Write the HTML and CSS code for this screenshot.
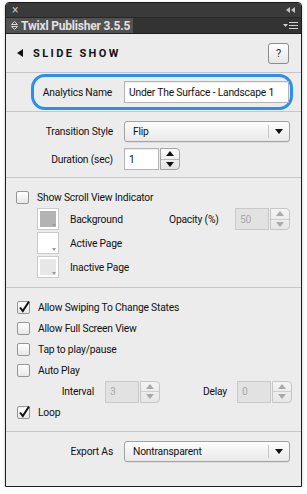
FILE: index.html
```html
<!DOCTYPE html>
<html lang="en">
<head>
    <meta charset="UTF-8">
    <title>Twixl Publisher</title>
    <link rel="stylesheet" href="styles.css">
</head>
<body>
    <div class="panel">
        <div class="titlebar">
            <span class="close">×</span>
            <svg class="collapse" width="9" height="6" viewBox="0 0 9 6"><path d="M4 0L0 3L4 6Z M9 0L5 3L9 6Z" fill="#c4c4c4"/></svg>
        </div>
        <div class="tabbar">
            <div class="tab">
                <svg class="updown" width="7" height="9" viewBox="0 0 7 9"><path d="M3.5 0.5L6.5 3.5H0.5Z M3.5 8.5L6.5 5.5H0.5Z" fill="none" stroke="#d8d8d8" stroke-width="1"/></svg>
                Twixl Publisher 3.5.5
            </div>
            <div class="tab-menu">
                <svg width="15" height="9" viewBox="0 0 15 9"><path d="M0 3H5L2.5 6Z" fill="#d0d0d0"/><path d="M6 1.5H15M6 4.5H15M6 7.5H15" stroke="#d0d0d0" stroke-width="1"/></svg>
            </div>
        </div>

        <div class="content">
            <div class="section head">
                <div class="head-title"><span class="back-arrow"></span>SLIDE SHOW</div>
                <div class="help">?</div>
            </div>

            <div class="section analytics">
                <div class="focus-ring">
                    <span class="ring-label">Analytics Name</span>
                    <div class="field name-field">Under The Surface - Landscape 1</div>
                </div>
            </div>

            <div class="section transition">
                <div class="row">
                    <span class="label">Transition Style</span>
                    <div class="select"><span class="select-value">Flip</span><span class="select-divider"></span><span class="select-caret"></span></div>
                </div>
                <div class="row duration-row">
                    <span class="label">Duration (sec)</span>
                    <div class="num">
                        <div class="field num-field">1</div>
                        <div class="spin"><span class="spin-up"></span><span class="spin-down"></span></div>
                    </div>
                </div>
            </div>

            <div class="section scroll">
                <div class="check-row">
                    <span class="checkbox"></span>
                    <span class="check-label">Show Scroll View Indicator</span>
                </div>
                <div class="swatch-row">
                    <span class="swatch"><span class="swatch-fill bg-fill"></span></span>
                    <span class="swatch-name">Background</span>
                    <span class="opacity-label">Opacity (%)</span>
                    <div class="num disabled">
                        <div class="field num-field">50</div>
                        <div class="spin"><span class="spin-up"></span><span class="spin-down"></span></div>
                    </div>
                </div>
                <div class="swatch-row">
                    <span class="swatch"><span class="swatch-fill active-fill"></span></span>
                    <span class="swatch-name">Active Page</span>
                </div>
                <div class="swatch-row">
                    <span class="swatch"><span class="swatch-fill inactive-fill"></span></span>
                    <span class="swatch-name">Inactive Page</span>
                </div>
            </div>

            <div class="section options">
                <div class="opt-row">
                    <span class="checkbox checked"><svg class="tick" width="14" height="14" viewBox="0 0 14 14"><path d="M3 7.5L5.8 11L12 1.5" fill="none" stroke="#111" stroke-width="2"/></svg></span>
                    <span class="check-label">Allow Swiping To Change States</span>
                </div>
                <div class="opt-row">
                    <span class="checkbox"></span>
                    <span class="check-label">Allow Full Screen View</span>
                </div>
                <div class="opt-row">
                    <span class="checkbox"></span>
                    <span class="check-label">Tap to play/pause</span>
                </div>
                <div class="opt-row">
                    <span class="checkbox"></span>
                    <span class="check-label">Auto Play</span>
                </div>
                <div class="timing-row">
                    <span class="interval-label">Interval</span>
                    <div class="num disabled">
                        <div class="field num-field">3</div>
                        <div class="spin"><span class="spin-up"></span><span class="spin-down"></span></div>
                    </div>
                    <span class="delay-label">Delay</span>
                    <div class="num disabled">
                        <div class="field num-field">0</div>
                        <div class="spin"><span class="spin-up"></span><span class="spin-down"></span></div>
                    </div>
                </div>
                <div class="opt-row">
                    <span class="checkbox checked"><svg class="tick" width="14" height="14" viewBox="0 0 14 14"><path d="M3 7.5L5.8 11L12 1.5" fill="none" stroke="#111" stroke-width="2"/></svg></span>
                    <span class="check-label">Loop</span>
                </div>
            </div>

            <div class="export">
                <div class="row">
                    <span class="label">Export As</span>
                    <div class="select"><span class="select-value">Nontransparent</span><span class="select-divider"></span><span class="select-caret"></span></div>
                </div>
            </div>
        </div>
    </div>
</body>
</html>
```

FILE: styles.css
```css
body {
    margin: 0;
    background: #ffffff;
    font-family: Roboto, "Liberation Sans", sans-serif;
    font-size: 10.3px;
    letter-spacing: -0.2px;
    color: #111111;
    white-space: nowrap;
}
.panel {
    margin: 2px 0 0 5px;
    width: 297px;
    height: 485px;
    box-sizing: border-box;
    border: 1px solid #1c1c1c;
    border-radius: 4px 4px 0 0;
    display: flex;
    flex-direction: column;
    overflow: hidden;
    box-shadow: 0 1px 3px rgba(0,0,0,.25);
}
.titlebar {
    height: 14px;
    flex: none;
    background: #3a3a3a;
    display: flex;
    align-items: center;
    justify-content: space-between;
    padding: 0 6px 0 6px;
}
.close {
    color: #bdbdbd;
    font-size: 12px;
    line-height: 12px;
}
.tabbar {
    height: 17px;
    flex: none;
    background: #333333;
    border-top: 1px solid #262626;
    border-bottom: 1px solid #1e1e1e;
    box-sizing: border-box;
    display: flex;
    justify-content: space-between;
}
.tab {
    width: 127px;
    background: #525252;
    color: #e2e2e2;
    font-weight: bold;
    font-size: 12px;
    letter-spacing: -0.2px;
    display: flex;
    align-items: center;
    padding-left: 5px;
    box-sizing: border-box;
}
.updown {
    margin-right: 3px;
}
.tab-menu {
    display: flex;
    align-items: center;
    padding-right: 3px;
}
.content {
    flex: 1;
    background: #ececec;
    display: flex;
    flex-direction: column;
}
.section {
    box-sizing: border-box;
    border-bottom: 1px solid #c5c5c5;
    flex: none;
}
.head {
    height: 39px;
    display: flex;
    align-items: center;
    justify-content: space-between;
    padding: 0 12px 0 11px;
}
.head-title {
    display: flex;
    align-items: center;
    font-weight: bold;
    font-size: 11px;
    letter-spacing: 2.4px;
    color: #111;
}
.back-arrow {
    width: 0;
    height: 0;
    border-top: 4px solid transparent;
    border-bottom: 4px solid transparent;
    border-right: 6px solid #111;
    margin-right: 10px;
}
.help {
    width: 21px;
    height: 21px;
    box-sizing: border-box;
    border: 1px solid #8c8c8c;
    border-radius: 3px;
    background: linear-gradient(#ffffff, #e6e6e6);
    display: flex;
    align-items: center;
    justify-content: center;
    font-size: 11px;
    color: #1a2340;
}
.analytics {
    height: 39px;
    padding-top: 1px;
}
.focus-ring {
    margin-left: 25px;
    width: 262px;
    height: 36px;
    box-sizing: border-box;
    border: 3px solid #2a8ef3;
    border-radius: 14px;
    display: flex;
    align-items: center;
}
.ring-label {
    width: 78px;
    text-align: right;
    margin-right: 12px;
}
.field {
    box-sizing: border-box;
    background: #ffffff;
    border: 1px solid #b4b4b4;
    box-shadow: inset 0 1px 1px rgba(0,0,0,.08);
    display: flex;
    align-items: center;
    padding-left: 4px;
}
.name-field {
    width: 165px;
    height: 22px;
}
.transition {
    height: 66px;
    padding-top: 9px;
}
.row {
    display: flex;
    align-items: center;
}
.label {
    width: 107px;
    text-align: right;
    margin-right: 11px;
}
.duration-row {
    margin-top: 6px;
}
.select {
    width: 166px;
    height: 21px;
    box-sizing: border-box;
    border: 1px solid #a2a2a2;
    border-radius: 3px;
    background: linear-gradient(#fdfdfd, #e8e8e8);
    box-shadow: 0 1px 0 rgba(0,0,0,.06);
    display: flex;
    align-items: center;
}
.select-value {
    width: 143px;
    box-sizing: border-box;
    padding-left: 8px;
}
.select-divider {
    width: 1px;
    height: 13px;
    background: #c9c9c9;
}
.select-caret {
    flex: 1;
    display: flex;
    justify-content: center;
}
.select-caret::before {
    content: "";
    border-left: 4px solid transparent;
    border-right: 4px solid transparent;
    border-top: 5px solid #111;
}
.num {
    display: flex;
    gap: 1px;
}
.num-field {
    width: 35px;
    height: 22px;
}
.spin {
    width: 20px;
    height: 22px;
    box-sizing: border-box;
    border: 1px solid #a3a3a3;
    border-radius: 0 4px 4px 0;
    background: linear-gradient(#fbfbfb, #e3e3e3);
    display: flex;
    flex-direction: column;
}
.spin-up,
.spin-down {
    flex: 1;
    display: flex;
    align-items: center;
    justify-content: center;
}
.spin-down {
    border-top: 1px solid #b8b8b8;
}
.spin-up::before {
    content: "";
    border-left: 4px solid transparent;
    border-right: 4px solid transparent;
    border-bottom: 5px solid #111;
}
.spin-down::before {
    content: "";
    border-left: 4px solid transparent;
    border-right: 4px solid transparent;
    border-top: 5px solid #111;
}
.num.disabled .num-field {
    width: 34px;
    background: #e2e2e2;
    border-color: #c9c9c9;
    box-shadow: none;
    color: #a8a8a8;
}
.num.disabled .spin {
    border-color: #c6c6c6;
    background: linear-gradient(#f4f4f4, #e6e6e6);
}
.num.disabled .spin-down {
    border-top-color: #cdcdcd;
}
.num.disabled .spin-up::before {
    border-bottom-color: #a9a9a9;
}
.num.disabled .spin-down::before {
    border-top-color: #a9a9a9;
}
.scroll {
    height: 110px;
    padding-top: 10px;
}
.check-row {
    height: 19px;
    display: flex;
    align-items: center;
    padding-left: 10px;
}
.checkbox {
    position: relative;
    width: 13px;
    height: 13px;
    box-sizing: border-box;
    border: 1px solid #959595;
    border-radius: 2px;
    background: linear-gradient(#fefefe, #e8e8e8);
    flex: none;
}
.tick {
    position: absolute;
    left: -1px;
    top: -2px;
}
.check-label {
    margin-left: 8px;
}
.swatch-row {
    height: 24px;
    display: flex;
    align-items: center;
    padding-left: 31px;
}
.swatch {
    position: relative;
    width: 22px;
    height: 22px;
    box-sizing: border-box;
    border: 1px solid #cacaca;
    background: #ffffff;
    padding: 2px;
    flex: none;
}
.swatch::after {
    content: "";
    position: absolute;
    right: 2px;
    bottom: 2px;
    border-left: 2px solid transparent;
    border-right: 2px solid transparent;
    border-top: 3px solid #9a9a9a;
}
.swatch-fill {
    display: block;
    width: 100%;
    height: 100%;
    box-sizing: border-box;
}
.bg-fill {
    background: #b3b3b3;
}
.active-fill {
    background: #ffffff;
}
.inactive-fill {
    background: #e7e7e7;
}
.swatch-name {
    width: 99px;
    margin-left: 11px;
}
.opacity-label {
    width: 66px;
}
.options {
    height: 144px;
    padding-top: 9px;
}
.opt-row {
    height: 21px;
    display: flex;
    align-items: center;
    padding-left: 11px;
}
.timing-row {
    height: 21px;
    display: flex;
    align-items: center;
}
.interval-label {
    width: 88px;
    text-align: right;
    margin-right: 11px;
}
.delay-label {
    width: 67px;
    text-align: right;
    margin-right: 10px;
}
.export {
    flex: 1;
    padding-top: 9px;
}
```
